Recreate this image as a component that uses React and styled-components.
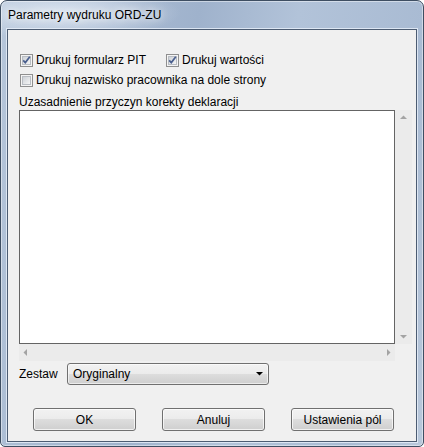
import React from "react"
import styled, { createGlobalStyle } from "styled-components"

const GlobalStyle = createGlobalStyle`
  html, body {
    margin: 0;
    padding: 0;
    background: #ffffff;
  }
  body {
    font-family: "Liberation Sans", Arial, sans-serif;
    font-size: 12px;
    color: #000;
  }
`

const Window = styled.div`
  box-sizing: border-box;
  width: 424px;
  height: 447px;
  border: 1px solid #3e4e62;
  border-radius: 7px 7px 5px 5px;
  padding: 0 6px 4px 6px;
  display: flex;
  flex-direction: column;
  background:
    radial-gradient(ellipse 120px 26px at 60px 12px, rgba(226, 234, 244, 0.9), rgba(226, 234, 244, 0) 100%),
    linear-gradient(100deg, #b6c6da 0%, #a7b9d1 25%, #9fb2cc 40%, #b2c3d9 60%, #a9bbd3 85%, #b9c8db 100%);
  box-shadow: inset 0 0 0 1px rgba(255, 255, 255, 0.45);
`

const TitleBar = styled.div`
  height: 28px;
  flex: none;
  box-sizing: border-box;
  padding: 7px 0 0 1px;
  line-height: 14px;
  font-size: 12px;
  color: #000;
  text-shadow: 0 0 6px rgba(255, 255, 255, 0.9), 0 0 12px rgba(255, 255, 255, 0.6);
`

const Client = styled.div`
  flex: 1;
  display: flex;
  flex-direction: column;
  background: #f0f0f0;
  border: 1px solid #4c5c72;
  box-shadow: 0 0 0 1px rgba(232, 240, 250, 0.8);
  padding: 20px 5px 0 11px;
`

const CheckRow = styled.div`
  display: flex;
  align-items: center;
  height: 20px;
`

const CheckItem = styled.label`
  display: flex;
  align-items: center;
  gap: 3px;
  line-height: 14px;
  width: ${(p) => p.$width || "auto"};
  padding-left: 1px;
`

const Caption = styled.div`
  line-height: 14px;
  margin-top: 5px;
  margin-bottom: 1px;
`

const EditArea = styled.div`
  display: grid;
  grid-template-columns: 376px 17px;
  grid-template-rows: 234px 17px;
`

const Memo = styled.div`
  box-sizing: border-box;
  background: #fff;
  border: 1px solid #646464;
`

const ScrollBar = styled.div`
  display: flex;
  flex-direction: ${(p) => (p.$horizontal ? "row" : "column")};
  justify-content: space-between;
  align-items: center;
  background: #ebebeb;
  padding: ${(p) => (p.$horizontal ? "0 4px" : "5px 0")};
`

const Corner = styled.div`
  background: #f0f0f0;
`

const SetRow = styled.div`
  display: flex;
  align-items: center;
  margin-top: 2px;
  height: 22px;
`

const SetLabel = styled.span`
  width: 48px;
  line-height: 14px;
`

const Combo = styled.div`
  box-sizing: border-box;
  width: 202px;
  height: 22px;
  display: flex;
  align-items: center;
  justify-content: space-between;
  padding: 0 5px 0 5px;
  border: 1px solid #707070;
  border-radius: 3px;
  background: linear-gradient(#f2f2f2 0%, #ebebeb 50%, #dddddd 50%, #cfcfcf 100%);
  box-shadow: inset 0 0 0 1px rgba(255, 255, 255, 0.6);
`

const ButtonRow = styled.div`
  display: flex;
  gap: 26px;
  margin-top: 23px;
  padding-left: 14px;
`

const Button = styled.button`
  box-sizing: border-box;
  width: 103px;
  height: 23px;
  font-family: "Liberation Sans", Arial, sans-serif;
  font-size: 12px;
  color: #000;
  border: 1px solid #707070;
  border-radius: 3px;
  background: linear-gradient(#f2f2f2 0%, #ebebeb 50%, #dddddd 50%, #cfcfcf 100%);
  box-shadow: inset 0 0 0 1px rgba(255, 255, 255, 0.7);
  padding: 0;
`

function CheckBox({ checked }) {
  return (
    <svg width="13" height="13" viewBox="0 0 13 13">
      <defs>
        <linearGradient id="cbg" x1="0" y1="0" x2="1" y2="1">
          <stop offset="0" stopColor="#cbcfd5" />
          <stop offset="1" stopColor="#f7f7f7" />
        </linearGradient>
      </defs>
      <rect x="0.5" y="0.5" width="12" height="12" fill="#f4f4f4" stroke="#8f8f8f" />
      <rect x="2.5" y="2.5" width="8" height="8" fill="url(#cbg)" stroke="#b9bdc3" strokeWidth="1" />
      {checked && (
        <path d="M3.2 6.4 L5.3 8.6 L9.8 2.8" fill="none" stroke="#4a5f8e" strokeWidth="1.7" />
      )}
    </svg>
  )
}

function Arrow({ dir, color = "#a3a3a3" }) {
  const pts = {
    up: "0,4 7,4 3.5,0.5",
    down: "0,0 7,0 3.5,3.5",
    left: "4,0 4,7 0.5,3.5",
    right: "0,0 0,7 3.5,3.5",
  }
  const vertical = dir === "up" || dir === "down"
  return (
    <svg width={vertical ? 7 : 4} height={vertical ? 4 : 7}>
      <polygon points={pts[dir]} fill={color} />
    </svg>
  )
}

export default function App() {
  return (
    <>
      <GlobalStyle />
      <Window>
        <TitleBar>Parametry wydruku ORD-ZU</TitleBar>
        <Client>
          <CheckRow>
            <CheckItem $width="145px">
              <CheckBox checked />
              Drukuj formularz PIT
            </CheckItem>
            <CheckItem>
              <CheckBox checked />
              Drukuj wartości
            </CheckItem>
          </CheckRow>
          <CheckRow>
            <CheckItem>
              <CheckBox />
              Drukuj nazwisko pracownika na dole strony
            </CheckItem>
          </CheckRow>
          <Caption>Uzasadnienie przyczyn korekty deklaracji</Caption>
          <EditArea>
            <Memo />
            <ScrollBar>
              <Arrow dir="up" />
              <Arrow dir="down" />
            </ScrollBar>
            <ScrollBar $horizontal>
              <Arrow dir="left" />
              <Arrow dir="right" />
            </ScrollBar>
            <Corner />
          </EditArea>
          <SetRow>
            <SetLabel>Zestaw</SetLabel>
            <Combo>
              <span>Oryginalny</span>
              <Arrow dir="down" color="#000" />
            </Combo>
          </SetRow>
          <ButtonRow>
            <Button>OK</Button>
            <Button>Anuluj</Button>
            <Button>Ustawienia pól</Button>
          </ButtonRow>
        </Client>
      </Window>
    </>
  )
}
